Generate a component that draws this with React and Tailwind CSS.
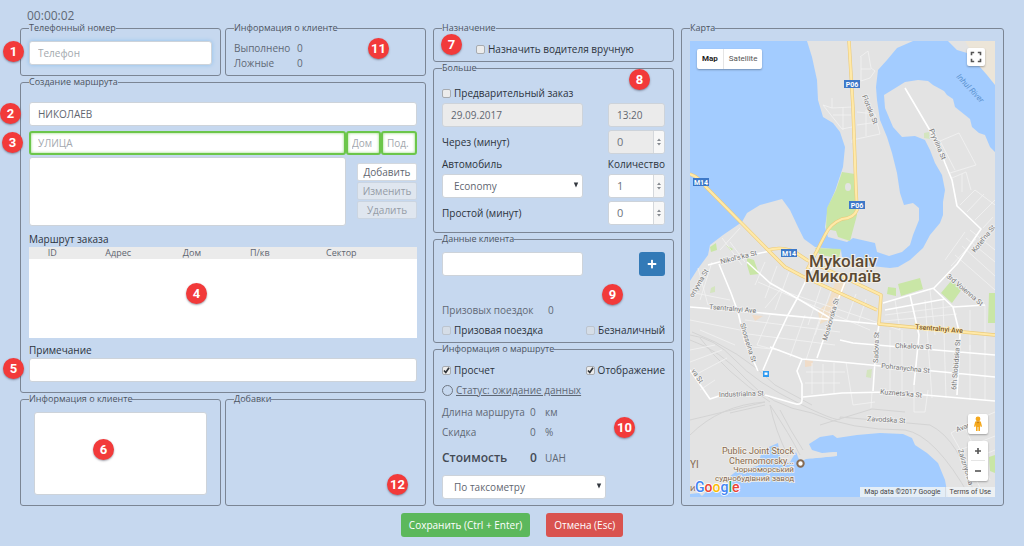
import clsx from "clsx";
import { FaPlus } from "react-icons/fa";

const control =
	"h-6 rounded-[3px] border border-[#cdd3da] bg-white text-[10px] leading-4 text-[#5f6670] outline-none placeholder:text-[#a3a8ae] disabled:bg-[#ebebeb]";
const greenControl =
	"h-6 rounded-[3px] border-2 border-[#6cc64a] bg-white text-[10px] leading-4 outline-none shadow-[inset_0_0_3px_#8fd673] placeholder:text-[#a3a8ae]";
const labelText = "text-[10px] leading-4 font-medium text-[#2c333c]";

function Badge({ children, className }) {
	return (
		<span
			className={clsx(
				"absolute z-10 flex size-[21px] items-center justify-center rounded-full bg-[#f23a3a] font-['Roboto',sans-serif] text-[13px] font-bold text-white shadow-[0_1px_2px_rgba(60,60,80,0.5)]",
				className
			)}
		>
			{children}
		</span>
	);
}

// fieldset with the title sitting on its border, badges go on top of it
function Panel({ title, badges, className, bodyClassName, children }) {
	return (
		<div className={clsx("relative min-w-0", className)}>
			<fieldset className="flex h-full min-w-0 flex-col rounded-[3px] border border-[#7b8594] px-2">
				<legend className="text-[9px] leading-[10px] text-[#4c545f]">{title}</legend>
				<div className={clsx("flex grow flex-col", bodyClassName)}>{children}</div>
			</fieldset>
			{badges}
		</div>
	);
}

function Check({ label, ...props }) {
	return (
		<label className={clsx("flex items-center gap-[3px]", labelText)}>
			<span className="relative flex size-[9px]">
				<input
					type="checkbox"
					className="peer size-[9px] appearance-none rounded-[2px] border border-[#a7abb0] bg-[#ececec] disabled:border-[#bcc4ce] disabled:bg-[#d5dde7]"
					{...props}
				/>
				<svg
					viewBox="0 0 9 9"
					className="pointer-events-none absolute inset-0 hidden size-[9px] peer-checked:block"
				>
					<path d="M2 4.5 L3.8 6.5 L7 1.8" fill="none" stroke="#2e3238" strokeWidth="1.7" />
				</svg>
			</span>
			{label}
		</label>
	);
}

function Spinner({ id, value, disabled }) {
	return (
		<span
			className={clsx(
				"flex h-6 w-[57px] overflow-hidden rounded-[3px] border border-[#cdd3da]",
				disabled ? "bg-[#ebebeb]" : "bg-white"
			)}
		>
			<input
				id={id}
				type="number"
				defaultValue={value}
				disabled={disabled}
				className="w-0 grow appearance-none pl-2 text-[11px] leading-4 text-[#6d737b] outline-none [appearance:textfield]"
			/>
			<span className="flex w-[11px] items-center justify-center border-l border-[#d5d8dc] bg-[#f7f7f7]">
				<svg viewBox="0 0 6 8" className="h-2 w-[6px]">
					<path d="M1 3 L3 0.5 L5 3 Z M1 5 L3 7.5 L5 5 Z" fill="#85898f" />
				</svg>
			</span>
		</span>
	);
}

function Dropdown({ label, option, className }) {
	return (
		<span className={clsx("relative flex", className)}>
			<select aria-label={label} className={clsx(control, "w-full appearance-none pl-[11px]")}>
				<option>{option}</option>
			</select>
			<svg viewBox="0 0 6 6" className="pointer-events-none absolute top-2 right-1 size-[6px]">
				<path d="M0.8 0.5 H5.2 L3 5.5 Z" fill="#33383f" />
			</svg>
		</span>
	);
}

const streets = [
	// west bank and centre
	"M690 307 L740 311 L877 324",
	"M708 265 L723 261 L770 251",
	"M719 264 L731 293 L738 312 L745 342 L758 371",
	"M747 262 L770 283 L800 300 L830 318",
	"M813 266 L798 297 L788 315 L772 349 L763 370",
	"M845 282 L838 300 L824 338 L817 358",
	"M770 347 L802 359 L840 362 L995 377",
	"M802 359 L797 371 L802 384 V400 Q802 405 796 404 L765 395",
	"M803 397 L842 393 L890 392 L995 401",
	"M840 340 L853 343 L995 355",
	"M879 324 L876 345 L873 391",
	"M910 295 L919 335 L914 385",
	"M933 288 L953 307 L960 335 L957 395",
	"M883 303 L934 288 L957 264 L981 229 L957 206 L952 180 L945 163 L938 144 L905 88",
	"M690 370 L710 399 L722 395",
	"M885 310 L945 299",
	"M953 307 L985 305",
];

const lanes = [
	"M823 105 L832 108 L852 107 M832 98 V108 M843 107 V130 M823 105 L842 129 L852 127 M833 115 H851",
	"M860 57 L868 51 L871 68 L875 71 L870 78 L861 81 V57 M861 69 H871",
	"M857 112 L875 114 L880 134 L852 140 V143 M866 110 V136 M857 125 L878 122",
	"M940 141 L959 133 L976 165 L950 173 M940 141 L955 170 M952 178 L966 172 L971 190 M962 174 V192",
	"M730 242 L745 262 M740 228 L720 250 M722 238 L742 265 M712 262 L700 300 M698 268 L708 305",
	"M765 262 L755 285 M777 266 L765 298 M789 272 L775 310 M822 284 L808 325 M832 288 L815 335 M856 294 L846 322 M866 299 L858 324",
	"M780 290 L765 308 M780 290 L900 330 M758 282 L870 330 M770 315 L757 345 L776 350 M805 315 L790 357 M820 318 L806 360",
	"M745 320 L840 332 M748 334 L835 345 M753 347 L780 350 M690 320 L740 330 M700 330 L735 345 M690 292 L730 300",
	"M806 372 H845 M805 383 H840 M812 363 V394 M823 364 V393 M834 363 V393 M846 362 L853 405 L875 402",
	"M890 330 V395 M902 330 V398 M925 300 L932 398 M943 300 L946 398 M970 345 V400 M985 340 V400",
	"M885 315 L955 306 M884 321 L957 314 M895 300 L900 330 M930 290 L935 335",
	"M955 255 L995 290 M962 246 L995 276 M966 238 L995 262 M970 230 L995 250 M945 260 L965 232 M951 266 L976 239",
	"M960 205 L975 190 L995 205 M967 212 L984 194 M975 220 L995 200 M983 228 L993 217 M985 305 V350 M970 310 V350",
	"M690 350 L715 345 M690 362 L722 350 M695 375 L727 358 M700 390 L715 380",
	"M951 433 L965 425 L995 412 M951 433 L967 462 L985 497 M965 428 L990 480 M960 450 L995 436 M966 462 L995 450",
	"M914 385 V412 M928 390 L925 412 H914 M872 392 L871 408",
];

const highways = [
	"M849 41 L853 108 L856 190 L857 210 Q854 218 842 219 Q830 224 825 235 L806 272",
	"M690 174 Q699 177 706 187 L768 250 L785 267 L802 276 L877 310",
	"M768 250 Q782 246 795 252 L807 260 L881 295 L879 324 L995 335",
];

const signs = [
	{ x: 844, y: 80, text: "P06" },
	{ x: 693, y: 178, text: "M14" },
	{ x: 849, y: 201, text: "P06" },
	{ x: 781, y: 249, text: "M14" },
];

const streetNames = [
	{ x: 862, y: 96, angle: 68, text: "Flotska St" },
	{ x: 929, y: 130, angle: 67, text: "Pryvilna St" },
	{ x: 721, y: 264, angle: -14, text: "Nikol's'ka St" },
	{ x: 693, y: 298, angle: -60, text: "ortyvna St" },
	{ x: 709, y: 309, angle: 5, text: "Tsentralnyi Ave" },
	{ x: 740, y: 324, angle: 73, text: "Shosseina St" },
	{ x: 827, y: 341, angle: -74, text: "Moskovska St" },
	{ x: 878, y: 363, angle: -88, text: "Sadova St" },
	{ x: 895, y: 348, angle: 2, text: "Chkalova St" },
	{ x: 881, y: 368, angle: 6, text: "Pohranychna St" },
	{ x: 880, y: 394, angle: 5, text: "Kuznets'ka St" },
	{ x: 867, y: 421, angle: 3, text: "Zavodska St" },
	{ x: 719, y: 397, angle: -2, text: "Industrialna St" },
	{ x: 956, y: 390, angle: -85, text: "6th Slobidska St" },
	{ x: 946, y: 277, angle: 40, text: "3rd Voienna St" },
	{ x: 975, y: 253, angle: -51, text: "Kotel'na St" },
	{ x: 691, y: 371, angle: 55, text: "va St" },
	{ x: 957, y: 432, angle: -20, text: "Avar" },
	{ x: 958, y: 450, angle: 73, text: "Zaliznychna" },
];

function CityMap() {
	return (
		<svg
			viewBox="690 41 305 456"
			preserveAspectRatio="xMidYMid slice"
			className="absolute inset-0 h-full w-full font-['Roboto',sans-serif]"
			role="img"
			aria-label="Mykolaiv"
		>
			<rect x="690" y="41" width="305" height="456" fill="#e3e3e3" />
			<path d="M965 41 H995 V85 L980 67 Z" fill="#ece5d8" />
			{/* city blocks in the centre */}
			<path d="M836 280 L846 284 L832 318 L820 324 L818 311 L828 303 Z" fill="#f0dfc8" />
			<path d="M752 315 L763 316 L755 321 Z M805 360 L813 361 L812 366 L805 367 Z" fill="#f0dcc8" />

			{/* water */}
			<g fill="#a3ccff">
				<path d="M690 41 H807 L812 57 L817 80 L818 100 L823 117 L833 123 L840 132 L845 147 L843 167 L835 191 L828 207 L825 227 L828 237 L847 242 L853 238 L875 243 L877 252 L889 256 L902 252 L910 245 L913 235 L919 220 V208 L913 203 L904 205 L900 193 L897 173 L892 153 L887 137 L880 120 L877 100 L876 87 L878 70 L887 60 L897 48 L913 41 H948 L957 50 L967 53 L980 67 L987 75 L995 85 V152 L990 147 L985 135 L979 133 L972 127 L970 119 L965 115 L955 107 L953 99 L947 95 L944 91 L933 85 L928 81 L918 80 L905 82 L897 87 L884 95 L885 108 L893 127 L902 137 L915 136 L925 140 L930 150 L935 163 L942 175 L945 190 L943 202 L943 215 L940 223 L930 235 L923 248 L910 260 L898 267 L890 268 L862 265 L842 257 L841 250 L815 247 L804 239 L798 227 L790 210 L782 199 L760 205 L747 213 L742 222 L723 235 L710 245 L708 255 L697 270 L690 281 Z" />
				<path d="M690 494 L699 493 L702 496 L706 492 L724 490 L729 477 L738 470 L758 466 L762 450 L778 443 L781 462 L790 462 L796 452 L800 462 L806 459 L837 456 V452 L822 453 L812 450 L809 444 L820 437 L833 435 L837 438 L857 435 L880 433 L903 434 L912 438 L915 445 L927 453 L938 463 L945 480 L948 497 H690 Z" />
			</g>

			{/* parks */}
			<g fill="#c9e6a6">
				<path d="M842 172 L855 174 L857 215 L850 241 L838 237 L836 231 L826 229 L827 208 L836 190 Z" />
				<path d="M815 248 L841 249 L839 258 L820 255 Z M898 284 L920 278 L923 289 L901 296 Z M951 281 L962 289 L952 303 L941 293 Z M989 293 H995 V323 H988 Z" />
				<path d="M747 258 L754 260 L759 274 L750 275 L747 265 Z M710 247 L716 243 L717 250 L711 252 Z M726 245 L733 249 L731 251 Z M888 287 L896 288 V296 L887 294 Z M989 457 L995 455 V473 L990 471 Z" />
				<path d="M867 370 L872 369 L871 378 L866 377 Z M924 133 L929 132 L930 139 L924 138 Z M711 288 L715 286 L715 292 L710 293 Z" opacity="0.6" />
			</g>
			<ellipse cx="848" cy="187" rx="3" ry="4" fill="#e3e3e3" />

			{/* railway yards */}
			<path
				d="M690 335 Q715 338 735 360 T800 404 T840 417 L930 425 Q960 440 975 497 M690 340 Q720 350 745 378 T812 413 Q850 430 905 430 Q935 435 970 497 M692 332 Q740 350 775 385 L812 405 M700 338 Q725 372 770 402 M690 435 Q720 405 765 402 L690 420 M770 405 Q790 435 800 455 M770 405 Q775 430 788 456 M730 413 L765 405 M780 410 Q790 430 803 450 M820 425 L872 409 L905 412"
				fill="none"
				stroke="#d4d4d4"
				strokeWidth="1"
			/>
			<path d="M803 450 Q806 457 815 456 L836 454" fill="none" stroke="#e3e3e3" strokeWidth="4" />

			<path d={lanes.join(" ")} fill="none" stroke="#f3f3f3" strokeWidth="0.8" />
			<path d={streets.join(" ")} fill="none" stroke="#ffffff" strokeWidth="1.6" strokeLinejoin="round" />
			<path d={highways.join(" ")} fill="none" stroke="#eccb7b" strokeWidth="3.4" strokeLinejoin="round" />
			<path d={highways.join(" ")} fill="none" stroke="#ffe9a8" strokeWidth="2.2" strokeLinejoin="round" />

			{signs.map((sign) => (
				<g key={sign.x + sign.text}>
					<rect x={sign.x} y={sign.y} width="16" height="8" fill="#3d78c8" />
					<text x={sign.x + 8} y={sign.y + 6.5} textAnchor="middle" fontSize="7" fontWeight="700" fill="#fff">
						{sign.text}
					</text>
				</g>
			))}
			<rect x="763" y="371" width="6" height="6" fill="#2f9af0" />
			<rect x="764.5" y="372.5" width="3" height="2.4" fill="#fff" />

			<g fontSize="7" fill="#777" stroke="#f1f1f1" strokeWidth="1.6" paintOrder="stroke">
				{streetNames.map((street) => (
					<text key={street.text + street.y} transform={`translate(${street.x} ${street.y}) rotate(${street.angle})`}>
						{street.text}
					</text>
				))}
			</g>
			<text transform="translate(915 329) rotate(5)" fontSize="7" fontWeight="500" fill="#7a5523" stroke="#ffeebb" strokeWidth="1.5" paintOrder="stroke">
				Tsentralnyi Ave
			</text>
			<text transform="translate(956 77) rotate(47)" fontSize="8" fontStyle="italic" fill="#5a92cf">
				Inhul River
			</text>

			<g fontSize="17" fontWeight="500" textAnchor="middle" fill="#5b4a34" stroke="#f4f0e8" strokeWidth="2" paintOrder="stroke">
				<text x="843" y="267">Mykolaiv</text>
				<text x="843" y="282">Миколаїв</text>
			</g>

			<g fill="#866a52" stroke="#f4f0e8" strokeWidth="1.6" paintOrder="stroke" textAnchor="end">
				<text x="794" y="454" fontSize="9">Public Joint Stock</text>
				<text x="794" y="464" fontSize="9">Chernomorsky...</text>
				<text x="794" y="472" fontSize="8">Чорноморський</text>
				<text x="794" y="481" fontSize="8">суднобудівний завод</text>
			</g>
			<circle cx="800.5" cy="463.5" r="3.2" fill="#fff" stroke="#866a52" strokeWidth="2" />
			<g fontSize="10" fill="#866a52">
				<text x="690" y="468">YI</text>
				<text x="690" y="491" fontSize="8">И</text>
			</g>

			<text x="695" y="492" fontSize="14" fontWeight="500" stroke="#fff" strokeWidth="1.6" paintOrder="stroke">
				<tspan fill="#4285f4">G</tspan>
				<tspan fill="#ea4335">o</tspan>
				<tspan fill="#fbbc05">o</tspan>
				<tspan fill="#4285f4">g</tspan>
				<tspan fill="#34a853">l</tspan>
				<tspan fill="#ea4335">e</tspan>
			</text>
		</svg>
	);
}

function MapControls() {
	const box = "rounded-[2px] bg-white shadow-[0_1px_2px_rgba(0,0,0,0.3)]";
	return (
		<div className="font-['Roboto',sans-serif] text-[#555]">
			<div className={clsx(box, "absolute top-2 left-[7px] flex h-5 text-[8px]")}>
				<button className="border-r border-[#e5e5e5] px-[5px] font-bold text-[#222]">Map</button>
				<button className="px-[5px]">Satellite</button>
			</div>
			<button
				aria-label="Fullscreen"
				className={clsx(box, "absolute top-[7px] right-[10px] flex size-[18px] items-center justify-center")}
			>
				<svg viewBox="0 0 12 12" className="size-3">
					<path
						d="M1.5 4.2 V1.5 H4.2 M7.8 1.5 H10.5 V4.2 M10.5 7.8 V10.5 H7.8 M4.2 10.5 H1.5 V7.8"
						fill="none"
						stroke="#555"
						strokeWidth="1.6"
					/>
				</svg>
			</button>
			<div className="absolute right-[7px] bottom-4 flex flex-col gap-[7px]">
				<button aria-label="Street View" className={clsx(box, "flex size-5 items-center justify-center")}>
					<svg viewBox="0 0 10 16" className="h-4 w-[10px]">
						<path d="M2.2 5.4 H7.8 L9 10.5 L7.8 11 L7 9 V15 H5.4 V11 H4.6 V15 H3 V9 L2.2 11 L1 10.5 Z" fill="#f5a81c" />
						<circle cx="5" cy="2.9" r="2.4" fill="#f5a81c" />
						<path d="M3 5.6 H7 L5 7.4 Z" fill="#c97f0a" />
					</svg>
				</button>
				<div className={clsx(box, "flex w-5 flex-col items-center")}>
					{["M1 4 H7 M4 1 V7", "M1 4 H7"].map((icon, i) => (
						<button
							key={icon}
							aria-label={i === 0 ? "Zoom in" : "Zoom out"}
							className="flex h-5 w-[14px] items-center justify-center border-[#e5e5e5] first:border-b"
						>
							<svg viewBox="0 0 8 8" className="size-2">
								<path d={icon} stroke="#555" strokeWidth="1.6" />
							</svg>
						</button>
					))}
				</div>
			</div>
			<div className="absolute right-0 bottom-0 flex h-[10px] items-center bg-[#f0f3f6]/85 text-[7px] leading-[10px] text-[#444]">
				<span className="border-r border-[#d5dbe2] px-1">Map data ©2017 Google</span>
				<a href="#terms" className="px-1">
					Terms of Use
				</a>
			</div>
		</div>
	);
}

function RoutePanel() {
	return (
		<Panel
			title="Создание маршрута"
			bodyClassName="pt-[15px] pb-[10px]"
			badges={
				<>
					<Badge className="top-[26px] -left-5">2</Badge>
					<Badge className="top-[55px] -left-[18px]">3</Badge>
					<Badge className="top-[206px] left-[166px]">4</Badge>
					<Badge className="top-[281px] -left-[17px]">5</Badge>
				</>
			}
		>
			<input aria-label="Город" defaultValue="НИКОЛАЕВ" className={clsx(control, "px-2")} />
			<div className="mt-[5px] flex">
				<input aria-label="Улица" placeholder="УЛИЦА" className={clsx(greenControl, "w-0 grow px-[7px]")} />
				<input aria-label="Дом" placeholder="Дом" className={clsx(greenControl, "w-[35px] pl-1")} />
				<input aria-label="Подъезд" placeholder="Под." className={clsx(greenControl, "w-9 pl-1")} />
			</div>
			<div className="mt-0.5 flex gap-[11px]">
				<select
					multiple
					aria-label="Адреса"
					className="h-[69px] w-0 grow rounded-[3px] border border-[#cdd3da] bg-white"
				/>
				<div className="flex w-[60px] flex-col gap-px pt-[6px]">
					<button className="h-[18px] rounded-[2px] border border-[#d3d8de] bg-white text-[10px] leading-4 text-[#5f6670]">
						Добавить
					</button>
					{["Изменить", "Удалить"].map((name) => (
						<button
							key={name}
							disabled
							className="h-[18px] rounded-[2px] border border-[#cbd5e1] bg-[#dfe6ef] text-[10px] leading-4 text-[#959ca6]"
						>
							{name}
						</button>
					))}
				</div>
			</div>
			<h2 className={clsx(labelText, "mt-[5px]")}>Маршрут заказа</h2>
			<div className="h-[91px] bg-white">
				<table className="w-full table-fixed text-[9px] leading-3 text-[#5f6670]">
					<thead className="bg-[#ebebeb]">
						<tr>
							<th className="w-[12%] font-normal">ID</th>
							<th className="w-[22%] font-normal">Адрес</th>
							<th className="w-[16%] font-normal">Дом</th>
							<th className="w-[19%] font-normal">П/кв</th>
							<th className="w-[23%] font-normal">Сектор</th>
							<th />
						</tr>
					</thead>
					<tbody />
				</table>
			</div>
			<label htmlFor="note" className={clsx(labelText, "mt-1")}>
				Примечание
			</label>
			<input id="note" className={clsx(control, "px-2")} />
		</Panel>
	);
}

function MorePanel() {
	return (
		<Panel title="Больше" bodyClassName="pt-3 pb-[7px]" badges={<Badge className="top-[6px] right-6">8</Badge>}>
			<Check label="Предварительный заказ" />
			<div className="mt-[2px] flex justify-between">
				<input
					aria-label="Дата"
					disabled
					defaultValue="29.09.2017"
					className={clsx(control, "w-[141px] px-2")}
				/>
				<input aria-label="Время" disabled defaultValue="13:20" className={clsx(control, "w-[57px] px-2")} />
			</div>
			<div className="mt-[3px] flex items-center justify-between">
				<label htmlFor="delay" className={labelText}>
					Через (минут)
				</label>
				<Spinner id="delay" value={0} disabled />
			</div>
			<div className="mt-[2px] flex justify-between">
				<span className={labelText}>Автомобиль</span>
				<label htmlFor="count" className={labelText}>
					Количество
				</label>
			</div>
			<div className="mt-[2px] flex justify-between">
				<Dropdown label="Автомобиль" option="Economy" className="w-[141px]" />
				<Spinner id="count" value={1} />
			</div>
			<div className="mt-[3px] flex items-center justify-between">
				<label htmlFor="idle" className={labelText}>
					Простой (минут)
				</label>
				<Spinner id="idle" value={0} />
			</div>
		</Panel>
	);
}

function TripInfoPanel() {
	return (
		<Panel
			title="Информация о маршруте"
			className="grow"
			bodyClassName="pt-2 pb-[6px]"
			badges={<Badge className="top-[73px] right-[39px]">10</Badge>}
		>
			<div className="flex justify-between">
				<Check label="Просчет" defaultChecked />
				<Check label="Отображение" defaultChecked />
			</div>
			<div className="mt-1 flex items-center gap-[3px]">
				<span className="size-[11px] rounded-full border border-[#6f7783]" />
				<span className="underline">Статус: ожидание данных</span>
			</div>
			<dl className="mt-[6px] grid grid-cols-[88px_15px_auto] items-center gap-y-1">
				<dt>Длина маршрута</dt>
				<dd>0</dd>
				<dd>км</dd>
				<dt>Скидка</dt>
				<dd>0</dd>
				<dd>%</dd>
				<dt className="pt-1 text-[12px] leading-5 font-semibold text-[#434a54]">Стоимость</dt>
				<dd className="pt-1 text-[12px] leading-5 font-semibold text-[#434a54]">0</dd>
				<dd className="pt-1">UAH</dd>
			</dl>
			<Dropdown label="Тариф" option="По таксометру" className="mt-[7px] w-[164px]" />
		</Panel>
	);
}

export default function App() {
	return (
		<main className="min-h-screen bg-[#c6d8ef] px-5 pt-2 pb-2 font-['Open_Sans',sans-serif] text-[10px] leading-4 text-[#5f6875]">
			<div className="pl-[7px] text-[12px] leading-[15px]">00:00:02</div>

			<div className="grid grid-cols-[406fr_241fr_323fr] gap-[7px]">
				<div className="flex min-w-0 flex-col gap-px">
					<div className="grid grid-cols-2 gap-1">
						<Panel
							title="Телефонный номер"
							bodyClassName="pt-2 pb-[10px]"
							badges={<Badge className="top-[18px] -left-[17px]">1</Badge>}
						>
							<input
								type="tel"
								aria-label="Телефон"
								placeholder="Телефон"
								className={clsx(control, "border-[#85bbea] px-2 shadow-[0_0_4px_#8fc2ee]")}
							/>
						</Panel>
						<Panel
							title="Информация о клиенте"
							bodyClassName="pt-2"
							badges={<Badge className="top-[15px] right-[37px]">11</Badge>}
						>
							<dl className="grid grid-cols-[63px_auto] leading-[15px]">
								<dt>Выполнено</dt>
								<dd>0</dd>
								<dt>Ложные</dt>
								<dd>0</dd>
							</dl>
						</Panel>
					</div>

					<RoutePanel />

					<div className="grid grow grid-cols-2 gap-1">
						<Panel
							title="Информация о клиенте"
							bodyClassName="px-[5px] pt-2 pb-[10px]"
							badges={<Badge className="top-[45px] left-[73px]">6</Badge>}
						>
							<textarea
								aria-label="Информация о клиенте"
								className="min-h-[82px] grow resize-none rounded-[3px] border border-[#cdd3da] bg-white"
							/>
						</Panel>
						<Panel title="Добавки" badges={<Badge className="top-20 right-[18px]">12</Badge>} />
					</div>
				</div>

				<div className="flex min-w-0 flex-col gap-px">
					<Panel
						title="Назначение"
						bodyClassName="pt-2 pb-1 pl-[34px]"
						badges={<Badge className="top-[11px] left-2">7</Badge>}
					>
						<Check label="Назначить водителя вручную" />
					</Panel>

					<MorePanel />

					<Panel
						title="Данные клиента"
						bodyClassName="pt-2 pb-1"
						badges={<Badge className="top-[50px] right-[51px]">9</Badge>}
					>
						<div className="flex justify-between">
							<input aria-label="Имя клиента" className={clsx(control, "w-[141px] px-2")} />
							<button
								aria-label="Добавить клиента"
								className="flex h-6 w-[26px] items-center justify-center rounded-[3px] bg-[#337ab7] text-[10px] text-white"
							>
								<FaPlus />
							</button>
						</div>
						<div className="mt-[26px] grid grid-cols-[106px_auto]">
							<span>Призовых поездок</span>
							<span>0</span>
						</div>
						<div className="mt-1 flex justify-between">
							<Check label="Призовая поездка" disabled />
							<Check label="Безналичный" disabled />
						</div>
					</Panel>

					<TripInfoPanel />
				</div>

				<Panel title="Карта" bodyClassName="pt-2 pb-2">
					<div className="relative min-h-[456px] grow overflow-hidden">
						<CityMap />
						<MapControls />
					</div>
				</Panel>
			</div>

			<div className="mt-[7px] flex justify-center gap-4">
				<button className="h-6 rounded-[3px] bg-[#5cb85c] px-2 text-white">Сохранить (Ctrl + Enter)</button>
				<button className="h-6 rounded-[3px] bg-[#d9534f] px-2 text-white">Отмена (Esc)</button>
			</div>
		</main>
	);
}
